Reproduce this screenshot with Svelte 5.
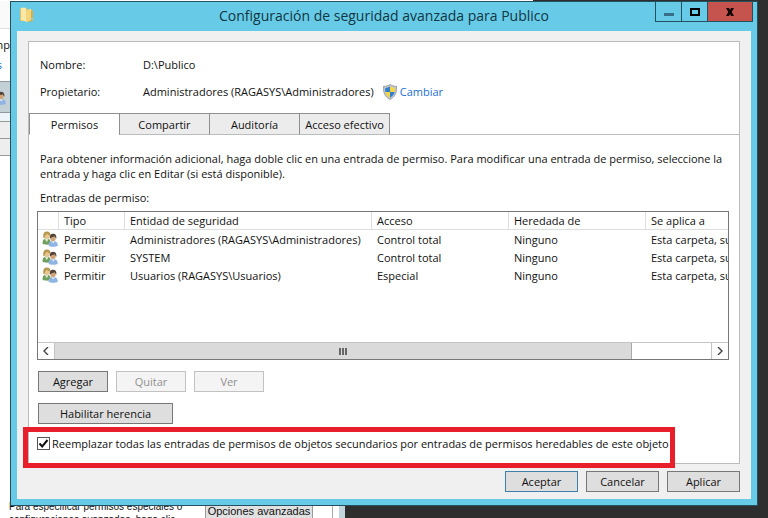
<script>
  const tabs = ['Permisos', 'Compartir', 'Auditoría', 'Acceso efectivo'];
  let active = $state('Permisos');
  let replaceAll = $state(true);

  const entries = [
    { type: 'Permitir', principal: 'Administradores (RAGASYS\\Administradores)', access: 'Control total', inherited: 'Ninguno', scope: 'Esta carpeta, su' },
    { type: 'Permitir', principal: 'SYSTEM', access: 'Control total', inherited: 'Ninguno', scope: 'Esta carpeta, su' },
    { type: 'Permitir', principal: 'Usuarios (RAGASYS\\Usuarios)', access: 'Especial', inherited: 'Ninguno', scope: 'Esta carpeta, su' }
  ];
</script>

{#snippet users()}
  <svg class="users" viewBox="0 0 16 16" aria-hidden="true">
    <path d="M.6 12.800C.4 9 2 7.400 4.600 7.400s4.200 1.600 4.200 5.400c-1.600 1.200-6.400 1.200-8.200 0z" fill="#6f9f5c" />
    <path d="M2.800 7.800l2 3.400 1.800-3.400z" fill="#dfe9cf" />
    <ellipse cx="4.900" cy="4.800" rx="2.700" ry="3.200" fill="#e6c68d" />
    <path d="M1.400 7C.8 2.600 2.200.6 4.900.6s4 1.600 3.400 4.400C6.800 4.300 5.600 3.500 5 2.600 4.400 3.800 2.900 4 2.600 7z" fill="#b5974f" />
    <path d="M6.600 14.800c-.2-3.200 1.400-4.700 4.500-4.700 3 0 4.800 1.500 4.700 4.700-1.800 1.400-7.400 1.400-9.200 0z" fill="#8fb4e3" />
    <path d="M9.500 10.200l1.700 2.400 1.700-2.400z" fill="#e6f0fb" />
    <ellipse cx="11" cy="7" rx="2.700" ry="3.200" fill="#d2a377" />
    <path d="M7.900 7.800C7.300 4 9 2.800 11 2.800s3.900 1.200 3.300 5c-.8-1-1.200-1.900-1.500-2.600-1.300.8-3.600.4-4.900 2.600z" fill="#53443a" />
  </svg>
{/snippet}

<div class="desktop">
  <div class="behind" aria-hidden="true">
    <div class="strip">
      <span class="s-top"></span>
      <span class="s-text">mp</span>
      <span class="s-link">s</span>
      <span class="s-sel">{@render users()}</span>
      <span class="s-gap"></span>
      <span class="s-gray"></span>
      <span class="s-gray two"></span>
    </div>
    <div class="hint">
      <p>Para especificar permisos especiales o<br />configuraciones avanzadas, haga clic</p>
      <span class="adv">Opciones avanzadas</span>
    </div>
  </div>
  <div class="behind-top"></div>

  <main class="window">
    <header class="titlebar">
      <svg class="folder" viewBox="0 0 16 16" aria-hidden="true">
        <path d="M1 1.500h7l1 1.500h4.500V14H1z" fill="#e7c05b" />
        <path d="M2 .8h5V14.500L2 13z" fill="#fae9a8" />
        <path d="M7 3.500L12 1.500v12L7 15.500z" fill="#f3d67c" />
        <path d="M12 4h1.800v10.500H8l4-1z" fill="#d9a941" />
        <circle cx="13" cy="12" r="1.600" fill="#b8c79a" />
      </svg>
      <h1>Configuración de seguridad avanzada para Publico</h1>
      <div class="controls">
        <button class="min" aria-label="Minimizar"><svg viewBox="0 0 12 12"><path d="M1 7h10v3H1z" fill="#366f86" /></svg></button>
        <button class="max" aria-label="Maximizar"><svg viewBox="0 0 12 12"><path d="M2 3h8v6H2z" fill="none" stroke="#000" stroke-width="2" /></svg></button>
        <button class="close" aria-label="Cerrar"><svg viewBox="0 0 12 12"><path d="M2 2h3l1 2 1-2h3L7.700 6 10 10H7L6 8l-1 2H2l2.300-4z" fill="#100" /></svg></button>
      </div>
    </header>

    <div class="client">
      <section class="panel">
        <dl>
          <dt>Nombre:</dt>
          <dd>D:\Publico</dd>
          <dt>Propietario:</dt>
          <dd>
            <span>Administradores (RAGASYS\Administradores)</span>
            <svg class="shield" viewBox="0 0 16 16" aria-hidden="true">
              <path d="M8 .5C6 1.800 4 2.300 1.500 2.300c-.4 6.200 1.200 10.500 6.500 13.200 5.300-2.700 6.900-7 6.500-13.200C12 2.300 10 1.800 8 .5z" fill="#c3c6c6" stroke="#8c949b" stroke-width=".8" />
              <path d="M8 2.600v5.400H3.400C3.200 6.600 3.100 5.400 3.200 4 5 3.900 6.500 3.500 8 2.600z" fill="#2f7fd0" />
              <path d="M8 2.600v5.400h4.600c.2-1.400.3-2.600.2-4C11 3.900 9.500 3.500 8 2.600z" fill="#f8d640" />
              <path d="M3.400 8H8v5.700C5.500 12.300 4 10.400 3.400 8z" fill="#f8d640" />
              <path d="M12.600 8H8v5.700c2.500-1.400 4-3.300 4.600-5.700z" fill="#2f7fd0" />
            </svg>
            <a href="#cambiar">Cambiar</a>
          </dd>
        </dl>

        <div class="tabs" role="tablist">
          {#each tabs as tab}
            <button role="tab" aria-selected={active === tab} class:active={active === tab} onclick={() => (active = tab)}>{tab}</button>
          {/each}
        </div>

        <div class="page">
          <p class="info">Para obtener información adicional, haga doble clic en una entrada de permiso. Para modificar una entrada de permiso, seleccione la entrada y haga clic en Editar (si está disponible).</p>
          <p class="caption" id="entries">Entradas de permiso:</p>

          <div class="list">
            <div class="rows">
              <table aria-labelledby="entries">
                <colgroup>
                  <col class="c-icon" /><col class="c-type" /><col class="c-who" /><col class="c-mid" /><col class="c-mid" /><col />
                </colgroup>
                <thead>
                  <tr>
                    <th></th><th>Tipo</th><th>Entidad de seguridad</th><th>Acceso</th><th>Heredada de</th><th>Se aplica a</th>
                  </tr>
                </thead>
                <tbody>
                  {#each entries as e}
                    <tr>
                      <td class="icon">{@render users()}</td>
                      <td>{e.type}</td><td>{e.principal}</td><td>{e.access}</td><td>{e.inherited}</td><td>{e.scope}</td>
                    </tr>
                  {/each}
                </tbody>
              </table>
            </div>
            <div class="scroll">
              <button aria-label="Desplazar a la izquierda"><svg viewBox="0 0 8 8"><path d="M6 0L2 4l4 4" /></svg></button>
              <div class="track"><div class="thumb"><i></i><i></i><i></i></div></div>
              <button class="right" aria-label="Desplazar a la derecha"><svg viewBox="0 0 8 8"><path d="M2 0l4 4-4 4" /></svg></button>
            </div>
          </div>

          <div class="actions">
            <button class="btn">Agregar</button>
            <button class="btn" disabled>Quitar</button>
            <button class="btn" disabled>Ver</button>
          </div>
          <div class="actions">
            <button class="btn wide">Habilitar herencia</button>
          </div>
          <div class="replace">
            <label>
              <input type="checkbox" bind:checked={replaceAll} />
              <span>Reemplazar todas las entradas de permisos de objetos secundarios por entradas de permisos heredables de este objeto</span>
            </label>
          </div>
        </div>
      </section>

      <footer>
        <button class="btn default">Aceptar</button>
        <button class="btn">Cancelar</button>
        <button class="btn">Aplicar</button>
      </footer>
    </div>
  </main>
</div>

<style>
  :global(body) {
    background: #2e2e2e;
  }
  .desktop {
    position: relative;
    box-sizing: border-box;
    min-height: 100vh;
    overflow: hidden;
    padding: 1px 10px 12px;
    font: 11px/15px 'Open Sans', sans-serif;
    color: #111;
  }
  button {
    font: inherit;
    color: inherit;
    margin: 0;
    padding: 0;
    border-radius: 0;
  }
  p, h1, dl, dd {
    margin: 0;
  }
  svg {
    display: block;
  }

  /* window underneath */
  .behind {
    position: absolute;
    inset: 0 auto 0 0;
    width: 345px;
    box-sizing: border-box;
    background: #fff;
    border-right: 6px solid #c3d5dc;
    display: flex;
    flex-direction: column;
    justify-content: space-between;
  }
  .behind-top {
    position: absolute;
    top: 0;
    left: 0;
    width: 533px;
    height: 1px;
    background: #fff;
  }
  .strip {
    width: 10px;
    display: flex;
    flex-direction: column;
  }
  .strip span {
    flex: none;
    box-sizing: border-box;
  }
  .s-top {
    height: 29px;
    background: #fafafa;
    border-bottom: 1px solid #ddd;
  }
  .s-text, .s-link {
    height: 20px;
    display: flex;
    justify-content: flex-end;
  }
  .s-text {
    height: 28px;
    padding-top: 8px;
  }
  .s-link {
    padding-right: 8px;
    color: #1a6fc4;
  }
  .s-sel {
    height: 32px;
    margin-top: 4px;
    padding: 7px 4px 0 0;
    background: #c3d1d6;
    border-block: 1px solid #8f9a9e;
    display: flex;
    justify-content: flex-end;
  }
  .s-gap {
    height: 8px;
    background: #eef5f8;
  }
  .s-gray {
    height: 17px;
    background: #eee;
    border-top: 1px solid #999;
  }
  .s-gray.two {
    height: 18px;
    border-bottom: 1px solid #999;
  }
  .hint {
    display: flex;
    justify-content: space-between;
    height: 18px;
    margin-right: 6px;
    padding: 0 19px 0 9px;
    border-right: 1px solid #aaa;
    white-space: nowrap;
    font: 10px/13px 'Liberation Sans', sans-serif;
  }
  .adv {
    box-sizing: border-box;
    width: 108px;
    height: 18px;
    margin-top: 3px;
    font-size: 11px;
    line-height: 15px;
    text-align: center;
    border: 1px solid #999;
    background: #e1e1e1;
  }

  /* dialog */
  .window {
    position: relative;
    box-sizing: border-box;
    background: #67cbe8;
    border: 1px solid #24515f;
    padding: 0 6px 6px;
  }
  .titlebar {
    display: grid;
    grid-template-columns: 1fr auto 1fr;
    height: 29px;
  }
  .folder {
    width: 16px;
    height: 16px;
    margin: 5px 0 0 2px;
  }
  h1 {
    font-size: 14px;
    font-weight: 400;
    line-height: 28px;
    color: #123642;
  }
  .controls {
    justify-self: end;
    display: flex;
    height: 20px;
    margin-right: -2px;
    border: 1px solid #24515f;
    border-top: 0;
    box-sizing: border-box;
  }
  .controls button {
    display: grid;
    place-items: center;
    width: 26px;
    border: 0;
    border-right: 1px solid #24515f;
    background: none;
  }
  .controls .close {
    width: 44px;
    border: 0;
    background: #c5544e;
  }
  .controls svg {
    width: 12px;
    height: 12px;
  }
  .client {
    background: #f0f0f0;
    padding: 10px 11px 7px;
  }
  .panel {
    background: #fff;
    border: 1px solid #b9bdbd;
  }
  dl {
    display: grid;
    grid-template-columns: 103px 1fr;
    row-gap: 11px;
    padding: 15px 11px 13px;
    line-height: 16px;
  }
  dd {
    display: flex;
    align-items: center;
  }
  .shield {
    width: 16px;
    height: 16px;
    margin: 0 2px 0 8px;
  }
  a {
    color: #1c6fd6;
    text-decoration: none;
  }
  .tabs {
    display: flex;
    margin-bottom: -1px;
  }
  .tabs button {
    box-sizing: border-box;
    width: 91px;
    height: 22px;
    margin-right: -1px;
    background: #ececec;
    border: 1px solid #8f8f8f;
    border-bottom-color: #b9bdbd;
  }
  .tabs .active {
    background: #fff;
    border-bottom-color: #fff;
  }
  .page {
    border-top: 1px solid #b9bdbd;
    padding: 16px 10px 12px 8px;
  }
  .info, .caption {
    padding-left: 3px;
  }
  .caption {
    margin: 9px 0 6px;
  }
  .list {
    border: 1px solid #777;
  }
  .rows {
    height: 130px;
    overflow: hidden;
  }
  table {
    width: 100%;
    table-layout: fixed;
    border-collapse: separate;
    border-spacing: 0;
  }
  .c-icon {
    width: 21px;
  }
  .c-type {
    width: 66px;
  }
  .c-who {
    width: 247px;
  }
  .c-mid {
    width: 137px;
  }
  th, td {
    box-sizing: border-box;
    height: 18px;
    padding: 0 0 0 5px;
    text-align: left;
    font-weight: 400;
    line-height: 17px;
    white-space: nowrap;
    overflow: hidden;
  }
  th {
    border-right: 1px solid #dedede;
    border-bottom: 1px solid #dedede;
  }
  th:last-child {
    border-right: 0;
  }
  td.icon {
    padding-left: 4px;
  }
  .users {
    flex: none;
    width: 16px;
    height: 16px;
  }
  .scroll {
    display: flex;
    height: 16px;
    border-top: 1px solid #c4c4c4;
  }
  .scroll button {
    display: grid;
    place-items: center;
    width: 17px;
    border: 0;
    border-right: 1px solid #c4c4c4;
    background: #fff;
  }
  .scroll .right {
    border-right: 0;
    border-left: 1px solid #c4c4c4;
  }
  .scroll svg {
    width: 8px;
    height: 8px;
    fill: none;
    stroke: #444;
    stroke-width: 1.4;
  }
  .track {
    flex: 1;
    background: #fff;
  }
  .thumb {
    box-sizing: border-box;
    width: 88%;
    height: 100%;
    display: flex;
    justify-content: center;
    align-items: center;
    gap: 1px;
    background: #dadada;
    border-right: 1px solid #a8a8a8;
  }
  .thumb i {
    width: 2px;
    height: 7px;
    background: #666;
  }
  .actions {
    display: flex;
    gap: 8px;
    margin: 11px 0 0 1px;
  }
  .btn {
    box-sizing: border-box;
    width: 70px;
    height: 21px;
    background: #dedede;
    border: 1px solid #777;
    line-height: 17px;
  }
  .btn:disabled {
    background: #f4f4f4;
    border-color: #c2c2c2;
    color: #919191;
  }
  .btn.wide {
    width: 135px;
  }
  .replace {
    position: relative;
    margin-top: 11px;
  }
  /* red marker around the option */
  .replace::after {
    content: '';
    position: absolute;
    inset: -8px 54px -17px -14px;
    border: 5px solid #e81f2b;
    pointer-events: none;
  }
  label {
    display: flex;
    align-items: center;
    gap: 2px;
    height: 16px;
    white-space: nowrap;
  }
  input {
    appearance: none;
    flex: none;
    box-sizing: border-box;
    width: 13px;
    height: 13px;
    margin: 0;
    border: 1px solid #555;
    background: #fff;
  }
  input:checked {
    background: url("data:image/svg+xml,%3Csvg xmlns='http://www.w3.org/2000/svg' viewBox='0 0 11 11'%3E%3Cpath d='M1.500 5.500l2.700 3L9.500 2' fill='none' stroke='%23111' stroke-width='2'/%3E%3C/svg%3E") #fff;
  }
  footer {
    display: flex;
    justify-content: flex-end;
    gap: 8px;
    margin-top: 7px;
  }
  footer .btn {
    width: 73px;
  }
  footer .default {
    border-color: #3f7fa8;
  }
</style>
